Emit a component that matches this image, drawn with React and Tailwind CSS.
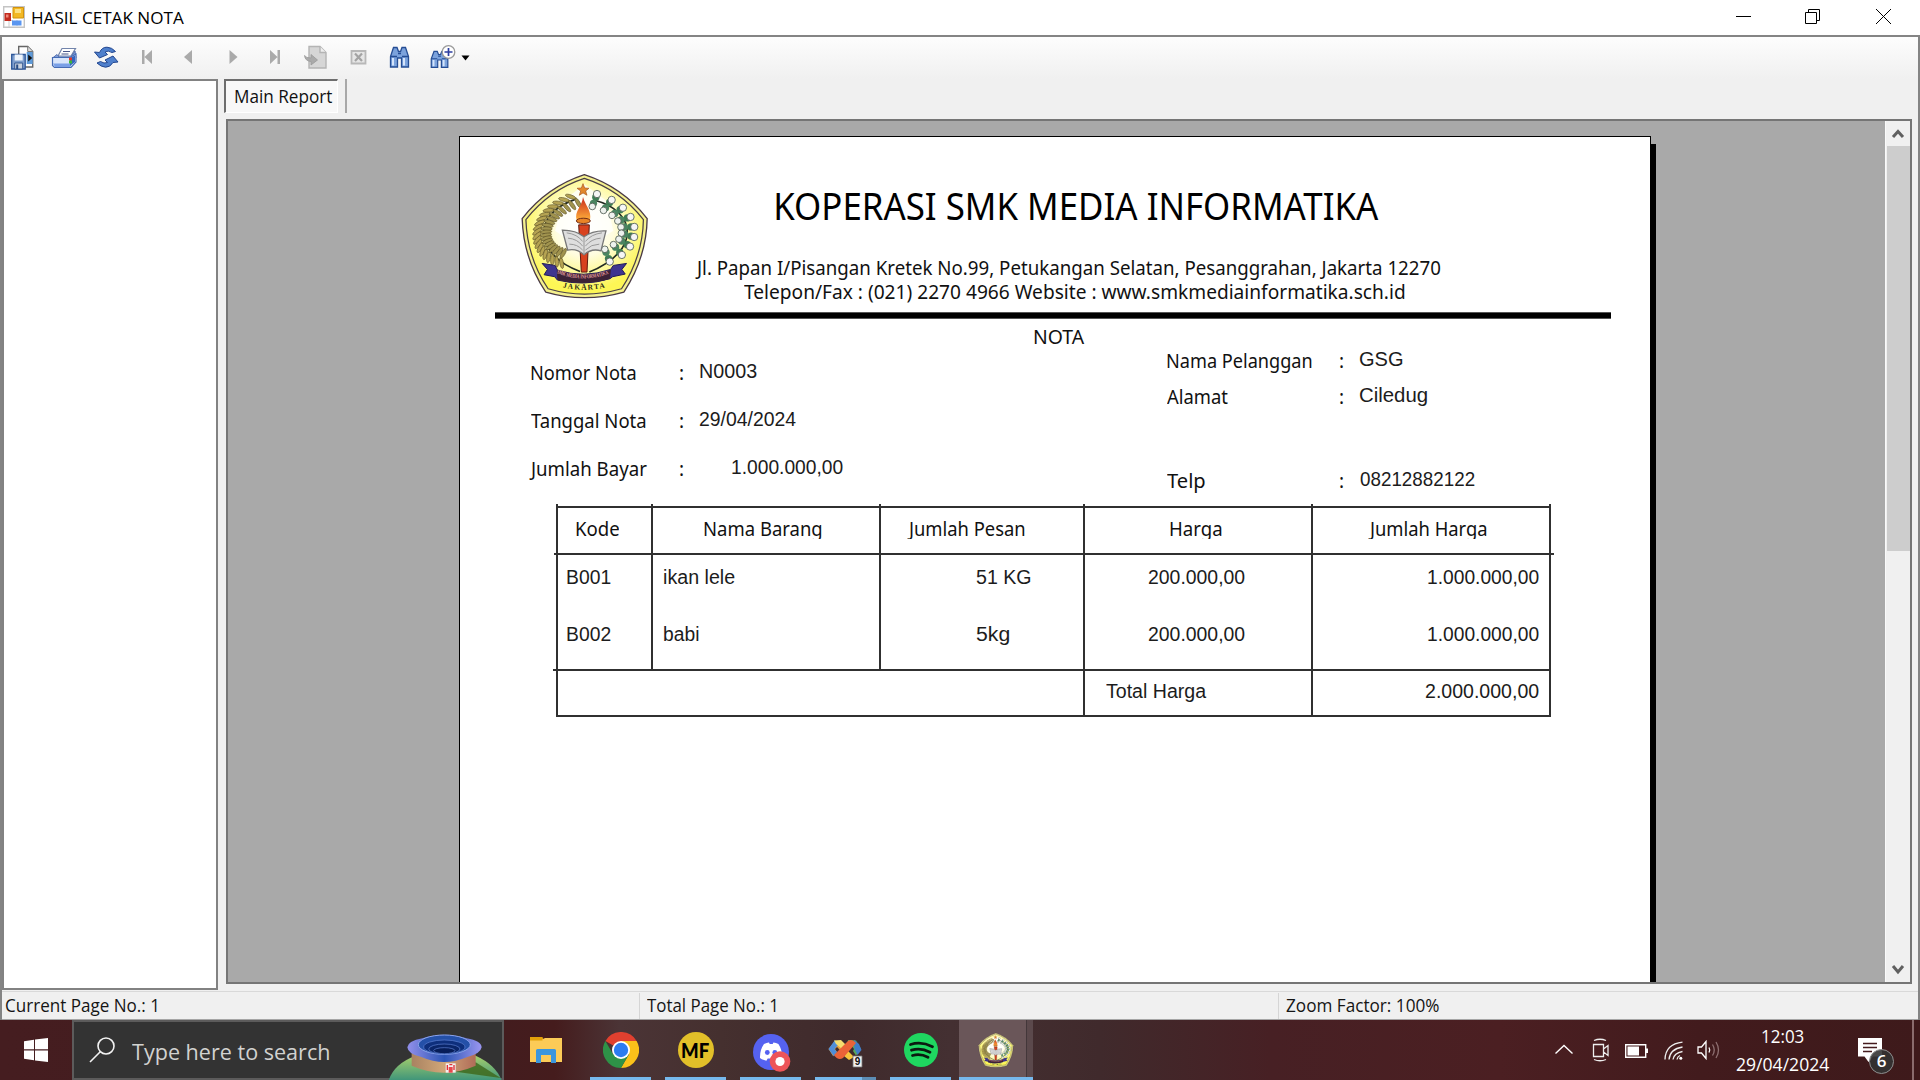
import React, { useLayoutEffect, useRef } from "react";

const TAHOMA = "font-['Noto_Sans',sans-serif] text-[19px] text-[#111]";
const ARIAL = "font-['Liberation_Sans',sans-serif] text-[20px] text-[#1c1c1c]";
const SEGOE = "font-['Open_Sans',sans-serif]";

// One line of text condensed or widened so that its ink fills its own box.
function Fit({ className = "", children }) {
  const box = useRef(null);
  const ink = useRef(null);
  useLayoutEffect(() => {
    const fit = () => {
      const ctx = document.createElement("canvas").getContext("2d");
      const cs = getComputedStyle(ink.current);
      ctx.font = `${cs.fontWeight} ${cs.fontSize} ${cs.fontFamily}`;
      const m = ctx.measureText(children);
      const left = m.actualBoundingBoxLeft;
      const width = left + m.actualBoundingBoxRight;
      if (!width) return;
      const s = box.current.getBoundingClientRect().width / width;
      ink.current.style.transform = `translateX(${left * s}px) scaleX(${s})`;
    };
    fit();
    document.fonts?.ready.then(() => ink.current && fit());
  }, [children]);
  return (
    <div ref={box} className={`shrink-0 whitespace-nowrap ${className}`}>
      <span ref={ink} className="inline-block origin-left">{children}</span>
    </div>
  );
}

const SHIELD = "M253 71Q368 108 442 203Q440 320 372 424Q253 458 137 424Q70 325 66 203Q140 108 253 71Z";

function Crest({ className }) {
  const at = (p, t) => {
    const u = 1 - t;
    return [0, 1].map((k) => u * u * u * p[0][k] + 3 * u * u * t * p[1][k] + 3 * u * t * t * p[2][k] + t * t * t * p[3][k]);
  };
  const wheat = [[224, 146], [95, 190], [100, 300], [186, 322]];
  const cotton = [[284, 148], [400, 180], [420, 275], [322, 314]];
  const steps = Array.from({ length: 20 }, (_, i) => i / 19);
  const balls = Array.from({ length: 9 }, (_, i) => i / 8);
  return (
    <svg className={className} viewBox="60 66 390 388">
      <defs>
        <radialGradient id="crestGlow" cx=".5" cy=".42" r=".55">
          <stop offset="0" stopColor="#fff" />
          <stop offset=".45" stopColor="#fffde0" />
          <stop offset="1" stopColor="#fdf655" />
        </radialGradient>
        <linearGradient id="crestFlame" x1="0" y1="0" x2="0" y2="1">
          <stop offset="0" stopColor="#c8281c" />
          <stop offset="1" stopColor="#ffb03a" />
        </linearGradient>
        <path id="crestBand" d="M168 366Q250 400 334 366" />
        <path id="crestCity" d="M188 410Q250 424 318 410" />
      </defs>
      <path d={SHIELD} fill="#f4f08e" stroke="#4a3a44" strokeWidth="4" />
      <path d={SHIELD} transform="translate(15.2 15.600) scale(.94)" fill="url(#crestGlow)" stroke="#4a4048" strokeWidth="4" />
      <path d="M253 100L190 150L165 240L250 300L340 240L320 150Z" fill="#fff" opacity=".75" />
      <path d="M224 146C95 190 100 310 240 362M284 148C410 180 425 300 268 364" fill="none" stroke="#222b22" strokeWidth="5" />
      {steps.map((t, i) => {
        const [x, y] = at(wheat, t);
        const a = 40 - t * 120;
        return (
          <g key={i} transform={`translate(${x} ${y}) rotate(${a})`}>
            <ellipse cx="-14" cy="-4" rx="17" ry="5.500" transform="rotate(-20)" fill="#b5a352" stroke="#5a4f24" strokeWidth="1.800" />
            <ellipse cx="14" cy="-4" rx="17" ry="5.500" transform="rotate(20)" fill="#a0934e" stroke="#5a4f24" strokeWidth="1.800" />
          </g>
        );
      })}
      {balls.map((t, i) => {
        const [x, y] = at(cotton, t);
        const dx = Math.sin((t + 0.15) * 2.4) * 20;
        const dy = -Math.cos((t + 0.15) * 2.4) * 20;
        return (
          <g key={i}>
            <circle cx={x + dx * 0.5} cy={y + dy * 0.5} r="11" fill="#3f7d55" />
            <circle cx={x - dx * 0.5} cy={y - dy * 0.5} r="11" fill="#4a8560" />
            <circle cx={x + dx} cy={y + dy} r="11" fill="#f6f6f6" stroke="#4c5a50" strokeWidth="2.500" />
            <circle cx={x - dx} cy={y - dy} r="10" fill="#eef2ee" stroke="#4c5a50" strokeWidth="2.500" />
          </g>
        );
      })}
      <path d="M249 98L254 111L267 112L257 120L261 133L249 126L238 133L242 120L231 112L244 111Z" fill="#e2882c" stroke="#a5531c" strokeWidth="2" />
      <path d="M236 222H268L261 364H244Z" fill="#d8421f" stroke="#5d1a10" strokeWidth="3" />
      <path d="M249 138C256 165 276 178 270 208H230C222 180 246 168 249 138Z" fill="url(#crestFlame)" />
      <ellipse cx="250" cy="210" rx="21" ry="8" fill="#e88427" stroke="#6d2a16" strokeWidth="3" />
      <path d="M187 238Q228 238 252 258Q278 238 318 240L303 300Q274 292 252 312Q230 292 203 298Z" fill="#dedede" stroke="#777" strokeWidth="4" />
      <path d="M252 258V312M200 246Q232 250 248 272M204 262Q232 264 248 286M208 280Q232 280 248 298M306 246Q274 250 256 272M302 262Q274 264 256 286M298 280Q274 280 256 298" fill="none" stroke="#999" strokeWidth="3" />
      <path d="M126 338L165 344L172 358Q250 384 332 356L340 344L380 338L366 356L376 370L338 378L330 384Q250 408 172 388L164 378L132 372L142 356Z" fill="#3e3590" stroke="#211b58" strokeWidth="3" />
      <path d="M170 358Q250 384 333 357L330 384Q250 408 172 388Z" fill="#3c2236" />
      <text fontSize="17" fontWeight="700" fill="#e8a0a0" className="font-['Liberation_Serif',serif]">
        <textPath href="#crestBand" startOffset="2" textLength="160" lengthAdjust="spacingAndGlyphs">SMK MEDIA INFORMATIKA</textPath>
      </text>
      <text fontSize="22" fontWeight="700" fill="#2c2a18" className="font-['Liberation_Serif',serif]">
        <textPath href="#crestCity" textLength="128">JAKARTA</textPath>
      </text>
    </svg>
  );
}

function Binoculars() {
  return (
    <g stroke="#254d94" strokeWidth="1.3" fill="#7ba2dc">
      <path d="M6 3.5h3.5l1.500 4h2l1.500-4H18l3 9v10.500h-7V14h-4v9H3V12.500z" />
      <path d="M5.500 14v7.500M16.500 14v7.500" stroke="#d4e4fb" strokeWidth="2" />
      <path d="M10.500 9.500h3M3 12.500h6.500M14.500 12.500H21" />
    </g>
  );
}

const TOOLS = [
  <g key="export" transform="translate(.7 0)">
    <path d="M10 2.500h9l5 5V23H10z" fill="#fff" stroke="#666" strokeWidth="1.400" />
    <path d="M19 2.500v5h5" fill="#ddd" stroke="#777" />
    <path d="M18 8h6v12h-6z" fill="#5f9ad8" />
    <path d="M19.500 10.500v7l4-3.500z" fill="#111" />
    <path d="M3 10.500h13.500V25H3z" fill="#7f9fce" stroke="#2c5699" strokeWidth="1.300" />
    <path d="M6 10.500h8v6H6z" fill="#eef4fb" />
    <path d="M6 19h8v6H6z" fill="#c9d2df" stroke="#35588f" />
    <path d="M7.500 20.500h2V25h-2z" fill="#264b85" />
  </g>,
  <g key="print">
    <path d="M8 12L12 4.500h13.500L21 12z" fill="#fff" stroke="#7284ab" strokeWidth="1.200" />
    <path d="M13 7.500h7M11.500 10h7" stroke="#49578a" strokeWidth="1.200" />
    <path d="M2.500 14L7 10.500l2 2.500h12l4-6 1 7-5 4z" fill="#7f9edb" stroke="#5470b0" />
    <path d="M2.500 13.500H20L26 10v8l-5 5.500H4.500l-2-2z" fill="#d9e6fb" stroke="#456cb5" strokeWidth="1.200" />
    <path d="M3 19.500h17.500V23H5z" fill="#7aa0e6" />
    <path d="M20 14l5-2.500V18l-5 4z" fill="#3565c0" />
    <path d="M19 13.500h3v3h-3z" fill="#e23a2a" />
    <path d="M19 16.500h3v3h-3z" fill="#3cb83a" />
  </g>,
  <g key="refresh" fill="#4f80cc" stroke="#21458f" strokeWidth="1">
    <path d="M7.500 8.500Q10 3 15 3.200T23.500 7.500L20 8.500Q16 6 13 8L15.500 10.500 7.500 14 2.500 8z" />
    <path d="M21 18.500Q18 23.500 13.500 23.200T5 19L8.500 17.500Q12 20 15.500 18.500L13 16 21 12 26 18z" />
  </g>,
  <path key="first" d="M8 6h2.500v14H8zM18 6v14l-7.500-7z" fill="#aaa" />,
  <path key="prev" d="M16 6v14l-8-7z" fill="#aaa" />,
  <path key="next" d="M11.500 6v14l8-7z" fill="#aaa" />,
  <path key="last" d="M10 6v14l7.500-7zM17.500 6H20v14h-2.500z" fill="#aaa" />,
  <g key="goto" fill="#d6d6d6" stroke="#b4b4b4" strokeWidth="1.400">
    <path d="M7 2.500h11l6 6V24H7z" />
    <path d="M18 2.500v6h6" fill="#eee" />
    <path d="M2.500 11.500Q4 14 9 14v-3.500l6.500 5.500L9 21V17.500Q3 17 2.500 11.500z" fill="#aaa" stroke="#999" strokeWidth=".8" />
  </g>,
  <g key="stop" fill="none" stroke="#b8b8b8" strokeWidth="1.800">
    <path d="M7.500 7h14v12.500h-14z" fill="#e6e6e6" />
    <path d="M11 9.500l7 7.500M18 9.500L11 17" stroke="#a3a3a3" strokeWidth="2.200" />
  </g>,
  <g key="find" transform="translate(1.500 0)"><Binoculars /></g>,
  <g key="zoom" transform="translate(1 0)">
    <g transform="translate(-.5 4.500) scale(.92 .82)"><Binoculars /></g>
    <circle cx="19.500" cy="8" r="6.300" fill="#fff" stroke="#9a9a9a" strokeWidth="1.300" />
    <path d="M15.500 8h8M19.500 4v8" stroke="#2d3ea0" strokeWidth="1.700" />
  </g>,
];

function TitleBar() {
  return (
    <div className="flex h-[35px] bg-white">
      <svg className="mt-[6px] ml-[3px] h-[22px] w-[22px]" viewBox="0 0 22 22">
        <path d="M.7.700h20.600v20.600H.7z" fill="#fff" stroke="#c4c4c4" strokeWidth="1.400" />
        <path d="M2 14.500h8M6 14v7M14 14v6" stroke="#ccc" />
        <path d="M1.500 7h6.500v8H1.500z" fill="#c32b1e" />
        <path d="M3 8.500h2.500v3H3z" fill="#ee8a7a" />
        <path d="M10 1.500h10.500v10.500H10z" fill="#f2b824" stroke="#d2920c" />
        <path d="M12 3h6v4h-6z" fill="#fbe083" />
        <path d="M9 14.500h9.500v5H9z" fill="#5a96f0" />
      </svg>
      <Fit className={`${SEGOE} mt-[5px] ml-[7px] w-[152px] text-[17px] leading-[26px] text-black`}>HASIL CETAK NOTA</Fit>
      <div className="ml-auto flex items-start pt-[9px] pr-[29px]">
        <svg className="mr-[54px] h-[16px] w-[15px]" viewBox="0 0 15 16"><path d="M0 7.500h15" stroke="#000" /></svg>
        <svg className="mr-[56px] h-[15px] w-[15px]" viewBox="0 0 15 15" fill="none" stroke="#000"><path d="M.5 3.500h11v11H.5zM3.500 3V.500h11v11H12" /></svg>
        <svg className="h-[15px] w-[15px]" viewBox="0 0 15 15" stroke="#000"><path d="M0 0L15 15M15 0L0 15" /></svg>
      </div>
    </div>
  );
}

function ToolBar() {
  return (
    <div className="flex h-[42px] bg-gradient-to-b from-[#fdfdfd] to-[#f0f0f0] pt-[7px] pl-[6px]">
      {TOOLS.map((icon, i) => (
        <div key={i} className={i === 10 ? "w-[33px]" : "w-[42px]"}>
          <svg className="h-[28px] w-[28px]" viewBox="0 0 28 28">{icon}</svg>
        </div>
      ))}
      <svg className="mt-[11px] h-[6px] w-[9px]" viewBox="0 0 9 6"><path d="M.5.500h8L4.500 5.500z" fill="#000" /></svg>
    </div>
  );
}

function Field({ label, value, className = "", labelClass, colonClass, valueClass }) {
  return (
    <div className={`flex h-6 ${className}`}>
      <Fit className={`${TAHOMA} leading-6 ${labelClass}`}>{label}</Fit>
      <Fit className={`${TAHOMA} w-[3px] leading-6 ${colonClass}`}>:</Fit>
      <Fit className={`${ARIAL} leading-[20px] ${valueClass}`}>{value}</Fit>
    </div>
  );
}

const COLUMNS = [
  { head: "Kode", box: "w-[95px]", headClass: "ml-[18px] w-[43px]", pad: "pl-[9px]", cells: [["B001", "w-[44px]"], ["B002", "w-[44px]"]] },
  { head: "Nama Barang", box: "w-[228px]", headClass: "ml-[51px] w-[118px]", pad: "pl-[11px]", cells: [["ikan lele", "w-[71px]"], ["babi", "w-[35px]"]] },
  { head: "Jumlah Pesan", box: "w-[204px]", headClass: "ml-[26px] w-[118px]", pad: "pl-[95px]", cells: [["51 KG", "w-[55px]"], ["5kg", "w-[33px]"]] },
  { head: "Harga", box: "w-[228px]", headClass: "ml-[85px] w-[52px]", pad: "pl-[64px]", cells: [["200.000,00", "w-[96px]"], ["200.000,00", "w-[96px]"]] },
  { head: "Jumlah Harga", box: "w-[240px] border-r-2", headClass: "ml-[55px] w-[119px]", pad: "pl-[115px]", cells: [["1.000.000,00", "w-[111px]"], ["1.000.000,00", "w-[111px]"]] },
];

const LINE = "border-[#303030]";

function ItemTable() {
  return (
    <div className="ml-[96px] w-[995px]">
      <div className="relative flex h-[47px]">
        {COLUMNS.map((c) => (
          <div key={c.head} className={`relative shrink-0 border-t-2 border-l-2 pt-[9px] ${LINE} ${c.box}`}>
            <span className="absolute -top-[4px] -left-[2px] h-[2px] w-[2px] bg-[#303030]" />
            <Fit className={`${TAHOMA} h-[22px] overflow-hidden leading-6 ${c.headClass}`}>{c.head}</Fit>
          </div>
        ))}
        <span className="absolute -top-[2px] right-0 h-[2px] w-[2px] bg-[#303030]" />
      </div>
      <div className="relative flex h-[116px]">
        <span className="absolute top-0 -left-[2px] h-[2px] w-[2px] bg-[#303030]" />
        <span className="absolute top-0 -right-[3px] h-[2px] w-[3px] bg-[#303030]" />
        {COLUMNS.map((c) => (
          <div key={c.head} className={`flex shrink-0 flex-col gap-[33px] border-t-2 border-l-2 pt-[10px] ${LINE} ${c.box} ${c.pad}`}>
            {c.cells.map(([text, w], i) => (
              <Fit key={i} className={`${ARIAL} h-6 leading-6 ${w}`}>{text}</Fit>
            ))}
          </div>
        ))}
      </div>
      <div className="relative flex h-[48px]">
        <span className="absolute top-0 -left-[3px] h-[2px] w-[3px] bg-[#303030]" />
        <div className={`w-[527px] shrink-0 border-y-2 border-l-2 ${LINE}`} />
        <div className={`w-[228px] shrink-0 border-y-2 border-l-2 pt-[8px] pl-[21px] ${LINE}`}>
          <Fit className={`${ARIAL} w-[101px] leading-6`}>Total Harga</Fit>
        </div>
        <div className={`w-[240px] shrink-0 border-2 pt-[8px] pl-[113px] ${LINE}`}>
          <Fit className={`${ARIAL} w-[113px] leading-6`}>2.000.000,00</Fit>
        </div>
      </div>
    </div>
  );
}

function ReportPage() {
  return (
    <div className="mt-[15px] ml-[231px] h-[900px] w-[1192px] shrink-0 border border-black bg-white shadow-[5px_8px_0_#000]">
      <div className="flex h-[175px]">
        <Crest className="mt-[36px] ml-[60px] h-[129px] w-[130px] shrink-0" />
        <div className="ml-[45px] flex w-[746px] flex-col pt-[44px]">
          <Fit className="ml-[81px] w-[603px] font-['Noto_Sans',sans-serif] text-[38px] leading-[48px] text-black">KOPERASI SMK MEDIA INFORMATIKA</Fit>
          <Fit className={`${TAHOMA} mt-[27px] w-[745px] leading-6`}>Jl. Papan I/Pisangan Kretek No.99, Petukangan Selatan, Pesanggrahan, Jakarta 12270</Fit>
          <Fit className={`${TAHOMA} ml-[49px] w-[661px] leading-6`}>Telepon/Fax : (021) 2270 4966 Website : www.smkmediainformatika.sch.id</Fit>
        </div>
      </div>
      <div className="ml-[35px] h-[7px] w-[1116px] border-y border-[#555] bg-black" />
      <div className="pt-[6px]">
        <Fit className={`${TAHOMA} ml-[574px] w-[51px] leading-6`}>NOTA</Fit>
      </div>
      <div className="flex h-[157px] pl-[71px]">
        <div className="flex w-[636px] flex-col gap-6 pt-[12px]">
          <Field label="Nomor Nota" value="N0003" labelClass="w-[105px]" colonClass="ml-[44px]" valueClass="ml-[17px] w-[57px]" />
          <Field label="Tanggal Nota" value="29/04/2024" labelClass="w-[115px]" colonClass="ml-[34px]" valueClass="ml-[17px] w-[96px]" />
          <Field label="Jumlah Bayar" value="1.000.000,00" labelClass="-ml-[2px] w-[118px]" colonClass="ml-[33px]" valueClass="ml-[49px] w-[111px]" />
        </div>
        <div>
          <Field label="Nama Pelanggan" value="GSG" labelClass="w-[145px]" colonClass="ml-[28px]" valueClass="ml-[17px] w-[43px]" />
          <Field className="mt-[12px]" label="Alamat" value="Ciledug" labelClass="w-[61px]" colonClass="ml-[112px]" valueClass="ml-[17px] w-[67px]" />
          <Field className="mt-[60px]" label="Telp" value="08212882122" labelClass="w-[38px]" colonClass="ml-[135px]" valueClass="ml-[17px] w-[115px]" />
        </div>
      </div>
      <ItemTable />
    </div>
  );
}

function ScrollBar() {
  return (
    <div className="flex w-[25px] flex-col items-center border-l border-[#fafafa] bg-[#f0f0f0]">
      <svg className="h-[25px] w-[24px] shrink-0" viewBox="0 0 24 25"><path d="M7 16L12 10.500L17 16" fill="none" stroke="#606060" strokeWidth="3" /></svg>
      <div className="h-[405px] w-[23px] shrink-0 bg-[#cdcdcd]" />
      <svg className="mt-auto h-[26px] w-[24px]" viewBox="0 0 24 26"><path d="M7 10L12 16L17 10" fill="none" stroke="#606060" strokeWidth="3" /></svg>
    </div>
  );
}

function Workspace() {
  return (
    <div className="flex h-[912px]">
      <div className="h-[911px] w-[216px] border-2 border-[#828282] bg-white" />
      <div className="ml-[6px] flex flex-1 flex-col pr-[6px]">
        <div className="flex h-[40px]">
          <div className="h-[34px] w-[114px] border-t-2 border-l-2 border-r border-b border-t-[#6d6d6d] border-r-white border-b-white border-l-[#6d6d6d] bg-[#f8f8f8] pt-[4px] pl-[9px]">
            <Fit className={`${SEGOE} w-[97px] text-[18px] leading-[22px] text-[#111]`}>Main Report</Fit>
          </div>
          <div className="ml-[7px] h-[34px] w-[2px] bg-[#a8a8a8]" />
        </div>
        <div className="ml-[2px] flex h-[865px] overflow-hidden border-2 border-[#757575] bg-[#a9a9a9]">
          <div className="flex flex-1 overflow-hidden">
            <ReportPage />
          </div>
          <ScrollBar />
        </div>
      </div>
    </div>
  );
}

function StatusBar() {
  const text = `${SEGOE} text-[17.5px] leading-[24px] text-[#151515]`;
  return (
    <div className="flex h-[29px] border-t border-b border-t-[#d9d9d9] border-b-[#a5a5a5] pt-[1px]">
      <div className="w-[637px] pl-[4px]"><Fit className={`${text} w-[151px]`}>Current Page No.: 1</Fit></div>
      <div className="w-[639px] border-l border-[#d5d5d5] pl-[7px]"><Fit className={`${text} w-[129px]`}>Total Page No.: 1</Fit></div>
      <div className="border-l border-[#d5d5d5] pl-[7px]"><Fit className={`${text} w-[153px]`}>Zoom Factor: 100%</Fit></div>
    </div>
  );
}

const APPS = [
  { id: "explorer", bar: "none", art: (
    <svg className="h-[36px] w-[36px]" viewBox="0 0 36 36">
      <path d="M2 5h12l2 3H2z" fill="#dd9a06" />
      <path d="M2 7h13l2-1h17v24H2z" fill="#fccb57" />
      <path d="M2 5h12.500v3.500H2z" fill="#e3a00a" />
      <path d="M8 18.500q0-1.500 1.500-1.500h17q1.500 0 1.500 1.500V31h-5v-8H13v8H8z" fill="#3b96dd" />
    </svg>) },
  { id: "chrome", bar: "full", art: (
    <svg className="h-[36px] w-[36px]" viewBox="0 0 36 36">
      <path d="M18 18L2.400 9A18 18 0 0 1 33.600 9z" fill="#e0402f" />
      <path d="M18 9H33.600A18 18 0 0 1 18 36L25.800 22.500z" fill="#fbc11a" />
      <path d="M10.200 22.500L2.400 9A18 18 0 0 0 18 36l7.800-13.500z" fill="#2e9247" />
      <circle cx="18" cy="18" r="9" fill="#fff" />
      <circle cx="18" cy="18" r="7.200" fill="#2c7cf0" />
    </svg>) },
  { id: "mf", bar: "full", art: (
    <div className="flex h-[36px] w-[36px] items-center justify-center rounded-full bg-[#e2c029]">
      <Fit className="w-[27px] font-['Lato',sans-serif] text-[20px] leading-[36px] font-black text-black">MF</Fit>
    </div>) },
  { id: "discord", bar: "full", art: (
    <svg className="h-[40px] w-[40px] translate-x-[2px] translate-y-[2px]" viewBox="2 2 40 40">
      <g transform="translate(2 2)">
        <circle cx="18" cy="18" r="18" fill="#5562f0" />
        <path d="M11 10q3-1.600 5-1.500l.7 1.500h3l.7-1.500q2.600.200 5 1.500 4 6 3.600 14-2.500 2-5.500 2.700l-1.300-2.200h-7.500l-1.300 2.200Q9.500 26 7 24q-.3-8 4-14z" fill="#fff" />
        <circle cx="14.300" cy="18.500" r="2.400" fill="#5562f0" />
        <circle cx="21.800" cy="18.500" r="2.400" fill="#5562f0" />
        <circle cx="27" cy="27.500" r="10.300" fill="#ed5459" />
        <circle cx="27" cy="27.500" r="4.600" fill="#fff" />
      </g>
    </svg>) },
  { id: "studio", bar: "split", art: (
    <svg className="h-[36px] w-[36px]" viewBox="1 1 36 36">
      <path d="M1.500 18L8 10h6l4 4-5 5-3-3-2 2 2 3-4 4z" fill="#e8a13a" />
      <path d="M1.500 18L7 25.500 10 21 7.500 18 11 14 8 9z" fill="#4f8ed8" />
      <path d="M7 9.500l7-.5 5 5-4 4-6-5z" fill="#f5dd6e" />
      <path d="M21 9l8 .5 5 8.500-5 6.500-3-4.500 1-2-3-4-4 2z" fill="#58a85c" />
      <path d="M27 9l5 4 2.500 6-4 5-3-6z" fill="#3f7cc9" />
      <path d="M17 25l4-5 6 6-5 3z" fill="#f7c53e" />
      <path d="M7 24L21 10q4-2.500 8 2L16 27q-5 3-9-3z" fill="#ea6338" />
      <path d="M26 25h9v11h-9z" fill="#f2f2f2" stroke="#777" strokeWidth=".8" />
      <text x="27.700" y="34.200" fontSize="10" fontWeight="700" fill="#111" className="font-['Liberation_Sans',sans-serif]">9</text>
    </svg>) },
  { id: "spotify", bar: "full", art: (
    <svg className="h-[36px] w-[36px]" viewBox="0 0 36 36">
      <circle cx="18" cy="18" r="17" fill="#1fd760" />
      <path d="M7.500 12.500q11-3.500 22 2.200M8.500 18.200q9.500-2.700 18.500 2M9.500 23.500q8-2.200 15.500 1.800" fill="none" stroke="#0b1a10" strokeWidth="2.800" strokeLinecap="round" />
    </svg>) },
  { id: "koperasi", bar: "active", art: <Crest className="h-[37px] w-[36px]" /> },
];

function TaskBar() {
  return (
    <div className="flex h-[60px] bg-[linear-gradient(90deg,#451d20_0px,#431c1e_505px,#451c1d_555px,#4b3436_620px,#45302f_720px,#3f2a2c_850px,#443032_950px,#402a2c_1100px,#472024_1270px,#4b1f22_1500px,#421b1d_1700px,#3e1a1b_1920px)]">
      <div className="flex w-[72px] shrink-0 justify-center pt-[18px]">
        <svg className="h-[24px] w-[24px]" viewBox="0 0 24 24" fill="#fff"><path d="M0 3.200L10 1.800V11.300H0zM11 1.600L24 0V11.300H11zM0 12.400H10V22.200L0 20.800zM11 12.400H24V24L11 22.400z" /></svg>
      </div>
      <div className="flex w-[432px] shrink-0 border-2 border-[#5c5b5b] bg-[#333333]">
        <svg className="mt-[15px] ml-[15px] h-[26px] w-[26px]" viewBox="0 0 26 26" fill="none" stroke="#f2f2f2" strokeWidth="1.600"><circle cx="17" cy="9" r="8" /><path d="M11.500 14.500L1 25" /></svg>
        <Fit className={`${SEGOE} mt-[12px] ml-[17px] w-[197px] text-[22px] leading-[34px] text-[#d2d2d0]`}>Type here to search</Fit>
        <svg className="mt-[12px] ml-auto h-[46px] w-[114px]" viewBox="1162 193 342 138">
          <defs>
            <linearGradient id="hill" x1="0" y1="0" x2="0" y2="1"><stop offset="0" stopColor="#a6cf6c" /><stop offset="1" stopColor="#3f957a" /></linearGradient>
            <linearGradient id="wall" x1="0" y1="0" x2="1" y2="0"><stop offset="0" stopColor="#a98261" /><stop offset=".5" stopColor="#d0a678" /><stop offset="1" stopColor="#b06c58" /></linearGradient>
            <linearGradient id="brim" x1="0" y1="0" x2="1" y2="0"><stop offset="0" stopColor="#9290ea" /><stop offset=".5" stopColor="#2c55b5" /><stop offset="1" stopColor="#9a96f0" /></linearGradient>
          </defs>
          <path d="M1164 332Q1180 282 1245 258H1425Q1485 285 1503 332z" fill="url(#hill)" />
          <path d="M1425 278L1500 325L1365 306z" fill="#3f6a1e" opacity=".85" />
          <path d="M1233 245V288Q1330 330 1425 288V245z" fill="url(#wall)" />
          <path d="M1220 233Q1222 214 1265 206Q1330 184 1398 206Q1442 214 1443 233Q1440 252 1400 262Q1330 292 1262 262Q1222 254 1220 233z" fill="url(#brim)" />
          <ellipse cx="1331" cy="225" rx="78" ry="29" fill="#2450a8" stroke="#8ca4ea" strokeWidth="3" />
          <g fill="none" stroke="#5f82d4" strokeWidth="2">
            <ellipse cx="1331" cy="232" rx="62" ry="21" fill="#0e2f7d" />
            <ellipse cx="1331" cy="238" rx="47" ry="15" fill="#0a2569" />
            <ellipse cx="1331" cy="243" rx="32" ry="9" fill="#071d58" />
          </g>
          <path d="M1335 281h30v28h-30z" fill="#f5f0ee" />
          <path d="M1340 286v15M1360 286v15M1346 285h9" stroke="#e03038" strokeWidth="4" />
          <path d="M1344 292h12v17h-12z" fill="#e8484c" />
        </svg>
      </div>
      <div className="ml-[4px] flex">
        {APPS.map((a) => (
          <div key={a.id} className="flex w-[75px] justify-center">
            <div className={`relative flex w-[61px] justify-center pt-[12px] ${a.bar === "active" ? "bg-[#6a5659] shadow-[-6px_0_0_#6a5659,1px_0_0_#43373a,7px_0_0_#5b494c]" : ""}`}>
              {a.art}
              {a.bar === "full" && <span className="absolute bottom-0 h-[3px] w-[61px] bg-[#76b9ed]" />}
              {a.bar === "active" && <span className="absolute bottom-0 -left-[6px] h-[3px] w-[74px] bg-[#76b9ed]" />}
              {a.bar === "split" && (
                <span className="absolute bottom-0 flex h-[3px] w-[61px] bg-[#76b9ed]">
                  <span className="ml-auto h-[3px] w-[14px] bg-[#5c8db5]" />
                </span>
              )}
            </div>
          </div>
        ))}
      </div>
      <div className="ml-auto flex">
        <svg className="mt-[24px] mr-[19px] h-[11px] w-[18px]" viewBox="0 0 18 11" fill="none" stroke="#fff" strokeWidth="1.400"><path d="M.5 9.500L9 1.500l8.500 8" /></svg>
        <svg className="mt-[18px] mr-[15px] h-[24px] w-[18px]" viewBox="0 0 18 24" fill="none" stroke="#eee" strokeWidth="1.300"><path d="M2 2.500q6-2.500 12 0M2 21.500q6 2.500 12 0M1.500 6.500h10v12h-10zM11.500 11L16 7.500v10L11.500 14z" /></svg>
        <svg className="mt-[24px] mr-[16px] h-[14px] w-[23px]" viewBox="0 0 23 14"><path d="M.7.700h20v12.500h-20z" fill="none" stroke="#fff" strokeWidth="1.400" /><path d="M2.500 2.500H14v9H2.500zM21 4.500h2v4.500h-2z" fill="#fff" /></svg>
        <svg className="mt-[21px] mr-[13px] h-[20px] w-[20px]" viewBox="0 0 20 20" fill="none" strokeWidth="1.300" stroke="#eee"><path d="M1 18.500Q1.500 3 18.500 1.200M5 18.500Q6 8 18.500 6M9 18.500Q10 12 18.500 10.500M13 18.500Q13.500 15.500 16 14.500" /><circle cx="16.800" cy="17.300" r="1.500" fill="#fff" stroke="none" /></svg>
        <svg className="mt-[20px] h-[20px] w-[23px]" viewBox="0 0 23 20" fill="none" strokeWidth="1.300" stroke="#fff"><path d="M1 7h3.500L9 1.500v17L4.500 13H1z" /><path d="M12 7.500q1.500 2.500 0 5" /><path d="M15.500 4.500q3.500 5.500 0 11M19 2q5 8 0 16" stroke="#8f7071" /></svg>
        <div className="ml-[16px] flex w-[93px] flex-col items-center pt-[2px]">
          <Fit className={`${SEGOE} w-[42px] text-[18px] leading-[28px] text-white`}>12:03</Fit>
          <Fit className={`${SEGOE} w-[93px] text-[18px] leading-[28px] text-white`}>29/04/2024</Fit>
        </div>
        <div className="relative mt-[18px] ml-[29px] h-[36px] w-[36px]">
          <svg className="h-[24px] w-[24px]" viewBox="0 0 24 24"><path d="M0 0h24v18.500h-9L10.500 24 6.500 18.500H0z" fill="#fff" /><path d="M5 5.500h14M5 9.500h14M5 13.500h9" stroke="#461c1f" strokeWidth="1.300" /></svg>
          <div className="absolute top-[11px] left-[11px] flex h-[25px] w-[25px] items-center justify-center rounded-full border border-[#8f8f8f] bg-[#333333]/90 pb-[2px] font-['Open_Sans',sans-serif] text-[17px] font-semibold text-white">6</div>
        </div>
        <div className="ml-[18px] h-[60px] w-[2px] bg-[#8a6c6d]" />
        <div className="w-[6px]" />
      </div>
    </div>
  );
}

export default function App() {
  return (
    <div className="flex h-[1080px] w-[1920px] flex-col overflow-hidden bg-[#f0f0f0]">
      <TitleBar />
      <div className="flex h-[985px] flex-col border-x-2 border-t-2 border-[#848484] bg-[#f0f0f0]">
        <ToolBar />
        <Workspace />
        <StatusBar />
      </div>
      <TaskBar />
    </div>
  );
}
